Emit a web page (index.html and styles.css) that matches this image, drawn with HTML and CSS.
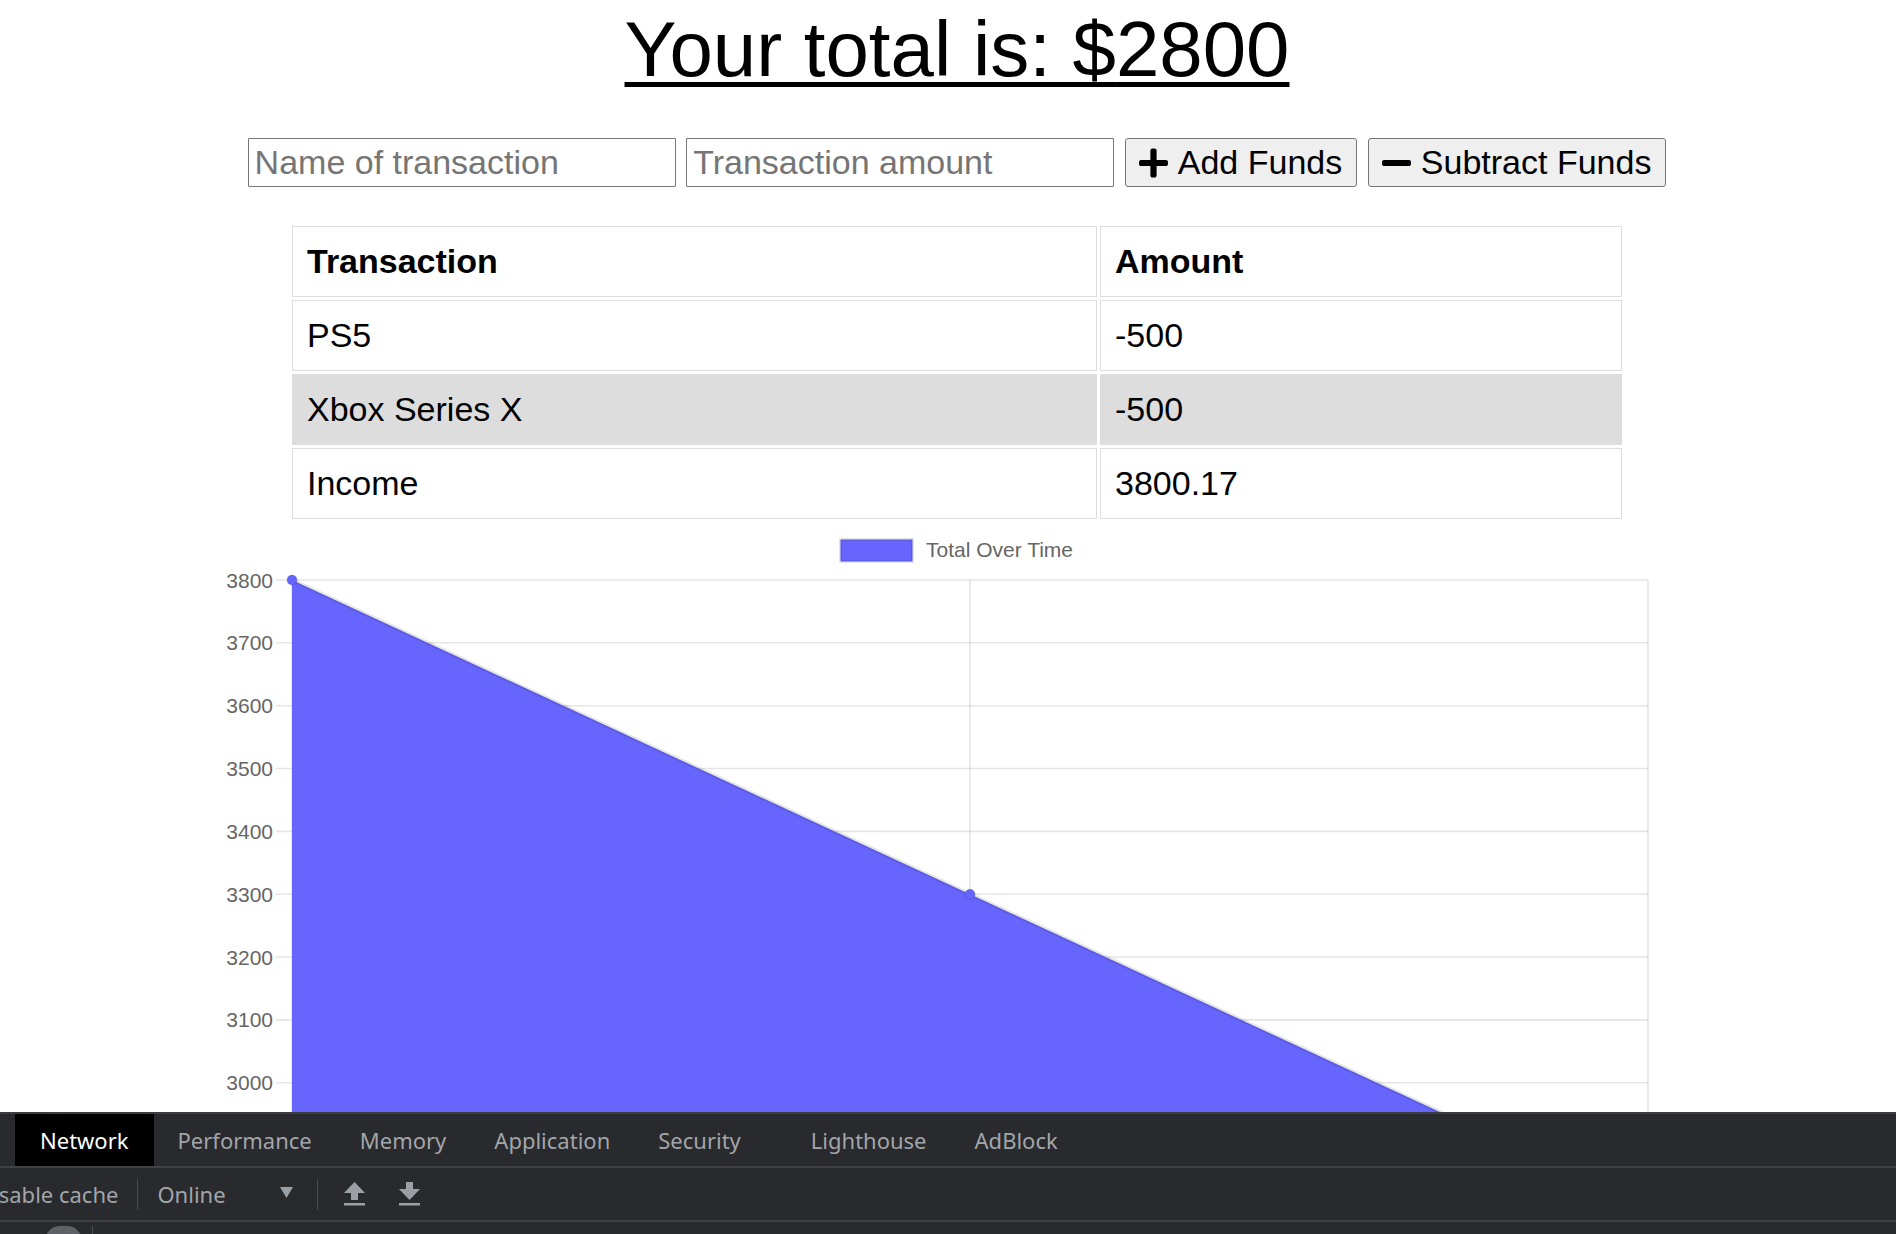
FILE: index.html
```html
<!DOCTYPE html>
<html lang="en">
<head>
<meta charset="utf-8">
<title>Budget Tracker</title>
<link rel="stylesheet" href="styles.css">
</head>
<body>
<div class="app">
  <main class="page">
    <h1 class="total">Your total is: $<span>2800</span></h1>

    <form class="entry">
      <input class="field" type="text" placeholder="Name of transaction">
      <input class="field" type="text" placeholder="Transaction amount">
      <button class="btn" type="button">
        <svg class="btn-icon" viewBox="0 0 448 512" aria-hidden="true"><path d="M416 208H272V64c0-17.67-14.33-32-32-32h-32c-17.67 0-32 14.33-32 32v144H32c-17.67 0-32 14.33-32 32v32c0 17.67 14.33 32 32 32h144v144c0 17.67 14.33 32 32 32h32c17.67 0 32-14.33 32-32V304h144c17.67 0 32-14.33 32-32v-32c0-17.670-14.33-32-32-32z"/></svg>
        <span>Add Funds</span>
      </button>
      <button class="btn" type="button">
        <svg class="btn-icon" viewBox="0 0 448 512" aria-hidden="true"><path d="M416 208H32c-17.67 0-32 14.33-32 32v32c0 17.67 14.330 32 32 32h384c17.67 0 32-14.33 32-32v-32c0-17.67-14.33-32-32-32z"/></svg>
        <span>Subtract Funds</span>
      </button>
    </form>

    <table class="txns">
      <thead>
        <tr><th class="col-name">Transaction</th><th>Amount</th></tr>
      </thead>
      <tbody>
        <tr><td>PS5</td><td>-500</td></tr>
        <tr class="alt"><td>Xbox Series X</td><td>-500</td></tr>
        <tr><td>Income</td><td>3800.17</td></tr>
      </tbody>
    </table>

    <svg class="chart" viewBox="18 522 1878 590" width="1878" height="590" aria-label="Total Over Time chart">
      <!-- legend -->
      <rect x="840.5" y="539.5" width="72" height="22" fill="#6666ff" stroke="rgba(0,0,0,0.1)" stroke-width="3"/>
      <text class="legend" x="926" y="557">Total Over Time</text>

      <!-- grid lines + tick marks -->
      <g stroke="rgba(0,0,0,0.1)" stroke-width="1.6">
        <line x1="276" y1="580" x2="1648" y2="580"/>
        <line x1="276" y1="642.8" x2="1648" y2="642.8"/>
        <line x1="276" y1="705.7" x2="1648" y2="705.7"/>
        <line x1="276" y1="768.5" x2="1648" y2="768.5"/>
        <line x1="276" y1="831.4" x2="1648" y2="831.4"/>
        <line x1="276" y1="894.2" x2="1648" y2="894.2"/>
        <line x1="276" y1="957" x2="1648" y2="957"/>
        <line x1="276" y1="1019.9" x2="1648" y2="1019.9"/>
        <line x1="276" y1="1082.7" x2="1648" y2="1082.7"/>
        <line x1="292" y1="580" x2="292" y2="1112"/>
        <line x1="970" y1="580" x2="970" y2="1112"/>
        <line x1="1648" y1="580" x2="1648" y2="1112"/>
      </g>

      <!-- y axis labels -->
      <g class="ticks">
        <text x="273" y="587.5">3800</text>
        <text x="273" y="650.3">3700</text>
        <text x="273" y="713.2">3600</text>
        <text x="273" y="776">3500</text>
        <text x="273" y="838.9">3400</text>
        <text x="273" y="901.7">3300</text>
        <text x="273" y="964.5">3200</text>
        <text x="273" y="1027.4">3100</text>
        <text x="273" y="1090.2">3000</text>
      </g>

      <!-- dataset -->
      <polygon points="292,580 970,894.2 1648,1208.4 1648,1300 292,1300" fill="#6666ff"/>
      <polyline points="292,580 970,894.2 1648,1208.4" fill="none" stroke="rgba(0,0,0,0.1)" stroke-width="4"/>
      <circle cx="292" cy="580" r="5" fill="#6666ff" stroke="rgba(0,0,0,0.1)" stroke-width="1.5"/>
      <circle cx="970" cy="894.2" r="5" fill="#6666ff" stroke="rgba(0,0,0,0.1)" stroke-width="1.5"/>
    </svg>
  </main>

  <section class="devtools">
    <nav class="dt-tabs">
      <span class="dt-tab active">Network</span>
      <span class="dt-tab">Performance</span>
      <span class="dt-tab">Memory</span>
      <span class="dt-tab">Application</span>
      <span class="dt-tab">Security</span>
      <span class="dt-tab dt-gap">Lighthouse</span>
      <span class="dt-tab">AdBlock</span>
    </nav>
    <div class="dt-toolbar">
      <span class="dt-cache">Disable cache</span>
      <span class="dt-sep"></span>
      <span class="dt-online">Online</span>
      <svg class="dt-caret" viewBox="0 0 13 11" aria-hidden="true"><polygon points="0,0 13,0 6.5,11"/></svg>
      <span class="dt-sep dt-sep2"></span>
      <svg class="dt-icon dt-up" viewBox="0 0 21 24" aria-hidden="true">
        <polygon points="10.5,0 21,11 14,11 14,18 7,18 7,11 0,11"/>
        <rect x="0" y="21" width="21" height="2.5"/>
      </svg>
      <svg class="dt-icon dt-down" viewBox="0 0 21 24" aria-hidden="true">
        <polygon points="7,0 14,0 14,7 21,7 10.5,18 0,7 7,7"/>
        <rect x="0" y="21" width="21" height="2.5"/>
      </svg>
    </div>
    <div class="dt-bottom">
      <span class="dt-record"></span>
      <span class="dt-vline"></span>
    </div>
  </section>
</div>
</body>
</html>
```

FILE: styles.css
```css
html, body {
  margin: 0;
  padding: 0;
  background: #ffffff;
  overflow: hidden;
}

body {
  font-family: "Liberation Sans", Arial, sans-serif;
  color: #000;
}

.app {
  display: flex;
  flex-direction: column;
  height: 1234px;
  width: 1896px;
}

.page {
  flex: 1;
  min-height: 0;
  overflow: hidden;
  padding-left: 18px;
  display: flex;
  flex-direction: column;
  align-items: center;
}

/* title */
.total {
  margin: 5px 0 0;
  font-size: 78px;
  font-weight: normal;
  line-height: 88px;
  text-decoration: underline;
  text-decoration-thickness: 5px;
  text-underline-offset: 6px;
}

/* entry form */
.entry {
  display: flex;
  gap: 10.6px;
  margin-top: 45px;
  height: 49px;
}

.field {
  box-sizing: border-box;
  width: 428px;
  height: 49px;
  margin: 0;
  padding: 0 6px;
  border: 1px solid #767676;
  border-radius: 1px;
  font-family: "Liberation Sans", Arial, sans-serif;
  font-size: 34px;
  color: #000;
  background: #fff;
}

.field::placeholder {
  color: #757575;
}

.btn {
  box-sizing: border-box;
  height: 49px;
  margin: 0;
  padding: 4px 14px 0 13px;
  display: flex;
  align-items: flex-start;
  border: 1px solid #767676;
  border-radius: 3px;
  background: #efefef;
  font-family: "Liberation Sans", Arial, sans-serif;
  font-size: 34px;
  line-height: 39px;
  color: #000;
}

.btn-icon {
  width: 29px;
  height: 34px;
  margin: 3px 10px 0 0;
  fill: #000;
}

/* table */
.txns {
  width: 1336px;
  margin-top: 36px;
  border-spacing: 3px;
  table-layout: fixed;
}

.txns th,
.txns td {
  box-sizing: border-box;
  border: 1px solid #dddddd;
  padding: 15px 14px;
  font-size: 34px;
  line-height: 39px;
  text-align: left;
  vertical-align: middle;
}

.txns th {
  font-weight: bold;
}

.txns .col-name {
  width: 805px;
}

.txns .alt td {
  background: #dddddd;
}

/* chart */
.chart {
  display: block;
  flex: none;
  width: 1878px;
  height: 590px;
}

.chart text {
  font-family: "Liberation Sans", Arial, sans-serif;
  font-size: 21px;
  fill: #666666;
}

.chart .ticks text {
  text-anchor: end;
}

/* devtools */
.devtools {
  flex: none;
  height: 122px;
  box-sizing: border-box;
  background: #292a2d;
  border-top: 2px solid #3c3d41;
  font-family: "Noto Sans", "Open Sans", sans-serif;
  font-size: 22px;
  color: #9aa0a6;
  overflow: hidden;
  display: flex;
  flex-direction: column;
}

.dt-tabs {
  flex: none;
  display: flex;
  height: 52px;
  padding-left: 15px;
  border-bottom: 2px solid #3f4145;
}

.dt-tab {
  padding: 0 24px;
  line-height: 52px;
  color: #a2a5a9;
  white-space: nowrap;
}

.dt-tab.active {
  background: #000;
  color: #ffffff;
  padding: 0 25px;
}

.dt-gap {
  margin-left: 22px;
}

.dt-toolbar {
  flex: none;
  display: flex;
  align-items: center;
  height: 52px;
  border-bottom: 2px solid #3f4145;
  white-space: nowrap;
}

.dt-cache {
  margin-left: -23px;
  color: #a2a5a9;
}

.dt-sep {
  flex: none;
  width: 1px;
  height: 31px;
  margin-left: 19px;
  background: #4a4c50;
}

.dt-online {
  margin-left: 19px;
  color: #a2a5a9;
}

.dt-caret {
  flex: none;
  width: 13px;
  height: 11px;
  margin: 0 0 4px 54px;
  fill: #9aa0a6;
}

.dt-sep2 {
  margin-left: 24px;
}

.dt-icon {
  flex: none;
  width: 21px;
  height: 24px;
  fill: #9aa0a6;
}

.dt-up {
  margin-left: 26px;
}

.dt-down {
  margin-left: 34px;
}

.dt-bottom {
  flex: 1;
  min-height: 0;
  overflow: hidden;
  display: flex;
  align-items: flex-start;
  padding-top: 4px;
}

.dt-record {
  flex: none;
  width: 37px;
  height: 30px;
  margin-left: 45px;
  border-radius: 15px;
  background: #5f6166;
}

.dt-vline {
  flex: none;
  width: 1px;
  height: 30px;
  margin-left: 10px;
  background: #4a4c50;
}
```
